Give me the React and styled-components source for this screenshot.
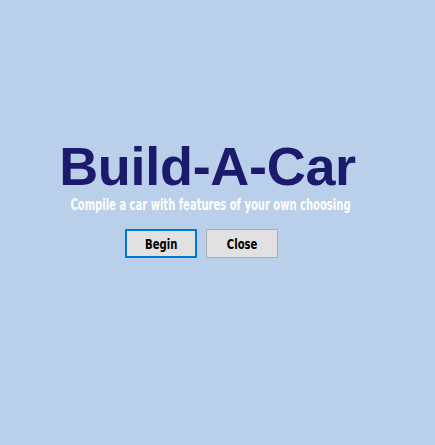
import React from "react";
import styled, { createGlobalStyle } from "styled-components";

const Global = createGlobalStyle`
  html, body { margin: 0; padding: 0; }
  body { background: #b9cfea; }
`;

const Page = styled.div`
  width: 435px;
  height: 445px;
  background: #b9cfea;
  display: flex;
  flex-direction: column;
  align-items: center;
  padding: 137px 20px 0 0;
  box-sizing: border-box;
`;

const Title = styled.h1`
  margin: 0;
  font-family: "Liberation Sans", Arial, sans-serif;
  font-weight: bold;
  font-size: 54px;
  line-height: 59px;
  color: #1b1a6c;
  letter-spacing: -0.3px;
  white-space: nowrap;
`;

const Subtitle = styled.p`
  margin: 0 0 0 5px;
  font-family: "DejaVu Sans Condensed", "DejaVu Sans", sans-serif;
  font-weight: bold;
  font-size: 16px;
  line-height: 17px;
  color: #ffffff;
  white-space: nowrap;
  transform: scaleX(0.695);
  transform-origin: center;
`;

const Buttons = styled.div`
  display: flex;
  gap: 9px;
  margin-top: 16px;
  margin-right: 12px;
`;

const Button = styled.button`
  width: 72px;
  height: 29px;
  box-sizing: border-box;
  background: #e1e1e1;
  border: ${(p) => (p.$primary ? "2px solid #0078d7" : "1px solid #adadad")};
  padding: 0;
  display: flex;
  align-items: center;
  justify-content: center;
`;

const Label = styled.span`
  display: inline-block;
  font-family: "DejaVu Sans Condensed", "DejaVu Sans", sans-serif;
  font-weight: bold;
  font-size: 14px;
  line-height: 14px;
  color: #000;
  transform: scaleX(0.8);
`;

export default function App() {
  return (
    <>
      <Global />
      <Page>
        <Title>Build-A-Car</Title>
        <Subtitle>Compile a car with features of your own choosing</Subtitle>
        <Buttons>
          <Button $primary><Label>Begin</Label></Button>
          <Button><Label>Close</Label></Button>
        </Buttons>
      </Page>
    </>
  );
}
